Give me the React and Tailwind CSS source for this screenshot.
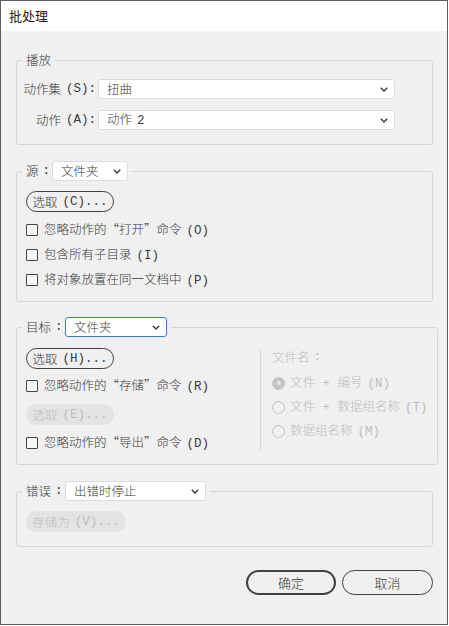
import React from "react";

// latin parts in the dialog use a monospaced serif face
function K({ children, tight }) {
  return (
    <span className={`font-['Liberation_Mono',monospace] ${tight ? "" : "ml-[5px]"}`}>{children}</span>
  );
}

function Chevron() {
  return (
    <svg width="8" height="5" viewBox="0 0 8 5" className="shrink-0">
      <polyline points="0.8,0.8 4,4 7.2,0.8" fill="none" stroke="#3a3a3a" strokeWidth="1.4" />
    </svg>
  );
}

function Select({ value, className, blue }) {
  return (
    <div
      className={`flex h-[20px] items-center justify-between rounded-[3px] border bg-white pl-[8px] pr-[6px] text-[12.5px] leading-[16px] font-light text-[#3a3a3a] ${
        blue ? "border-[#3b78c9]" : "border-[#dcdcdc]"
      } ${className}`}
    >
      <span>{value}</span>
      <Chevron />
    </div>
  );
}

function LegendLabel({ text, className, disabled }) {
  return (
    <span
      className={`flex items-center text-[12.5px] leading-[16px] font-light whitespace-nowrap ${
        disabled ? "text-[#bdbdbd]" : "text-[#3a3a3a]"
      } ${className}`}
    >
      {text}
      <span className="ml-[4px] font-['Liberation_Mono',monospace]">:</span>
    </span>
  );
}

function PillButton({ children, className }) {
  return (
    <div
      className={`flex h-[21px] items-center justify-center rounded-full border-[1.5px] border-[#404040] text-[12.5px] leading-[16px] font-light whitespace-nowrap text-[#3a3a3a] ${className}`}
    >
      {children}
    </div>
  );
}

function DisabledButton({ children, className }) {
  return (
    <div
      className={`flex h-[21px] items-center justify-center rounded-full bg-[#e3e3e3] text-[12.5px] leading-[16px] font-light whitespace-nowrap text-[#bdbdbd] ${className}`}
    >
      {children}
    </div>
  );
}

function Check({ label, className }) {
  return (
    <div className={`flex h-[25px] items-center gap-[6px] ${className}`}>
      <div className="h-[12px] w-[12px] rounded-[1px] border border-[#444] bg-[#f7f7f7]" />
      <span className="text-[12.5px] leading-[16px] font-light whitespace-nowrap text-[#3a3a3a]">{label}</span>
    </div>
  );
}

function Radio({ label, checked }) {
  return (
    <div className="flex h-[24px] items-center gap-[5px]">
      <div
        className={`flex h-[13px] w-[13px] items-center justify-center rounded-full border ${
          checked ? "border-[#c4c4c4] bg-[#c4c4c4]" : "border-[#c4c4c4]"
        }`}
      >
        {checked && <div className="h-[4px] w-[4px] rounded-full bg-[#e6e6e6]" />}
      </div>
      <span className="text-[12.5px] leading-[16px] font-light whitespace-nowrap text-[#bdbdbd]">{label}</span>
    </div>
  );
}

export default function App() {
  return (
    <div className="flex h-[625px] w-[448px] flex-col border border-[#5e5e5e] bg-[#f0f0f0] font-['Noto_Sans_CJK_SC','Liberation_Sans',sans-serif]">
      <div className="flex h-[30px] items-center bg-white px-[8px] text-[13px] text-[#1a1a1a]">
        批处理
      </div>

      <div className="flex flex-1 flex-col pl-[15px] pr-[14px] pt-[21px]">
        {/* 播放 */}
        <fieldset className="rounded-[3px] border border-[#d6d6d6] px-[9px] pb-[14px]">
          <legend className="ml-[-4px] px-[4px] text-[12.5px] leading-[16px] font-light text-[#3a3a3a]">播放</legend>
          <div className="mt-[11px] flex flex-col gap-[11px]">
            <div className="flex items-center gap-[2px]">
              <span className="flex w-[70px] justify-end text-[12.5px] leading-[16px] font-light whitespace-nowrap text-[#3a3a3a]">
                动作集<K>(S):</K>
              </span>
              <Select value="扭曲" className="w-[297px]" />
            </div>
            <div className="flex items-center gap-[2px]">
              <span className="flex w-[70px] justify-end text-[12.5px] leading-[16px] font-light whitespace-nowrap text-[#3a3a3a]">
                动作<K>(A):</K>
              </span>
              <Select value={<>动作<K>2</K></>} className="w-[297px]" />
            </div>
          </div>
        </fieldset>

        {/* 源 */}
        <fieldset className="mt-[16px] rounded-[3px] border border-[#d6d6d6] px-[9px] pb-[9px]">
          <legend className="ml-[-4px] px-[4px]">
            <div className="flex items-center">
              <LegendLabel text="源" className="w-[26px]" />
              <Select value="文件夹" className="w-[76px]" />
            </div>
          </legend>
          <PillButton className="mt-[10px] w-[88px]">
            选取<K>(C)...</K>
          </PillButton>
          <div className="mt-[5px] flex flex-col">
            <Check label={<>忽略动作的“打开”命令<K>(O)</K></>} />
            <Check label={<>包含所有子目录<K>(I)</K></>} />
            <Check label={<>将对象放置在同一文档中<K>(P)</K></>} />
          </div>
        </fieldset>

        {/* 目标 */}
        <fieldset className="mt-[15px] rounded-[3px] border border-[#d6d6d6] px-[9px] pb-[9px]">
          <legend className="ml-[-4px] px-[4px]">
            <div className="flex items-center">
              <LegendLabel text="目标" className="w-[39px]" />
              <Select value="文件夹" className="w-[102px]" blue />
            </div>
          </legend>
          <div className="flex">
            <div className="flex w-[234px] flex-col">
              <PillButton className="mt-[11px] w-[88px]">
                选取<K>(H)...</K>
              </PillButton>
              <Check label={<>忽略动作的“存储”命令<K>(R)</K></>} className="mt-[4px]" />
              <DisabledButton className="mt-[6px] w-[88px]">
                选取<K>(E)...</K>
              </DisabledButton>
              <Check label={<>忽略动作的“导出”命令<K>(D)</K></>} className="mt-[5px]" />
            </div>
            <div className="mt-[12px] flex h-[101px] flex-col border-l border-[#d8d8d8] pl-[11px]">
              <LegendLabel text="文件名" disabled />
              <div className="mt-[6px] flex flex-col">
                <Radio label={<>文件<K tight> + </K>编号<K>(N)</K></>} checked />
                <Radio label={<>文件<K tight> + </K>数据组名称<K>(T)</K></>} />
                <Radio label={<>数据组名称<K>(M)</K></>} />
              </div>
            </div>
          </div>
        </fieldset>

        {/* 错误 */}
        <fieldset className="mt-[16px] rounded-[3px] border border-[#d6d6d6] px-[9px] pb-[14px]">
          <legend className="ml-[-4px] px-[4px]">
            <div className="flex items-center">
              <LegendLabel text="错误" className="w-[39px]" />
              <Select value="出错时停止" className="w-[141px]" />
            </div>
          </legend>
          <DisabledButton className="mt-[10px] w-[100px]">
            存储为<K>(V)...</K>
          </DisabledButton>
        </fieldset>

        <div className="mt-[23px] flex justify-end gap-[6px]">
          <div className="flex h-[25px] w-[90px] items-center justify-center rounded-full border-2 border-[#404040] text-[13px] font-light text-[#3a3a3a]">
            确定
          </div>
          <div className="flex h-[25px] w-[91px] items-center justify-center rounded-full border-[1.5px] border-[#404040] text-[13px] font-light text-[#3a3a3a]">
            取消
          </div>
        </div>
      </div>
    </div>
  );
}
